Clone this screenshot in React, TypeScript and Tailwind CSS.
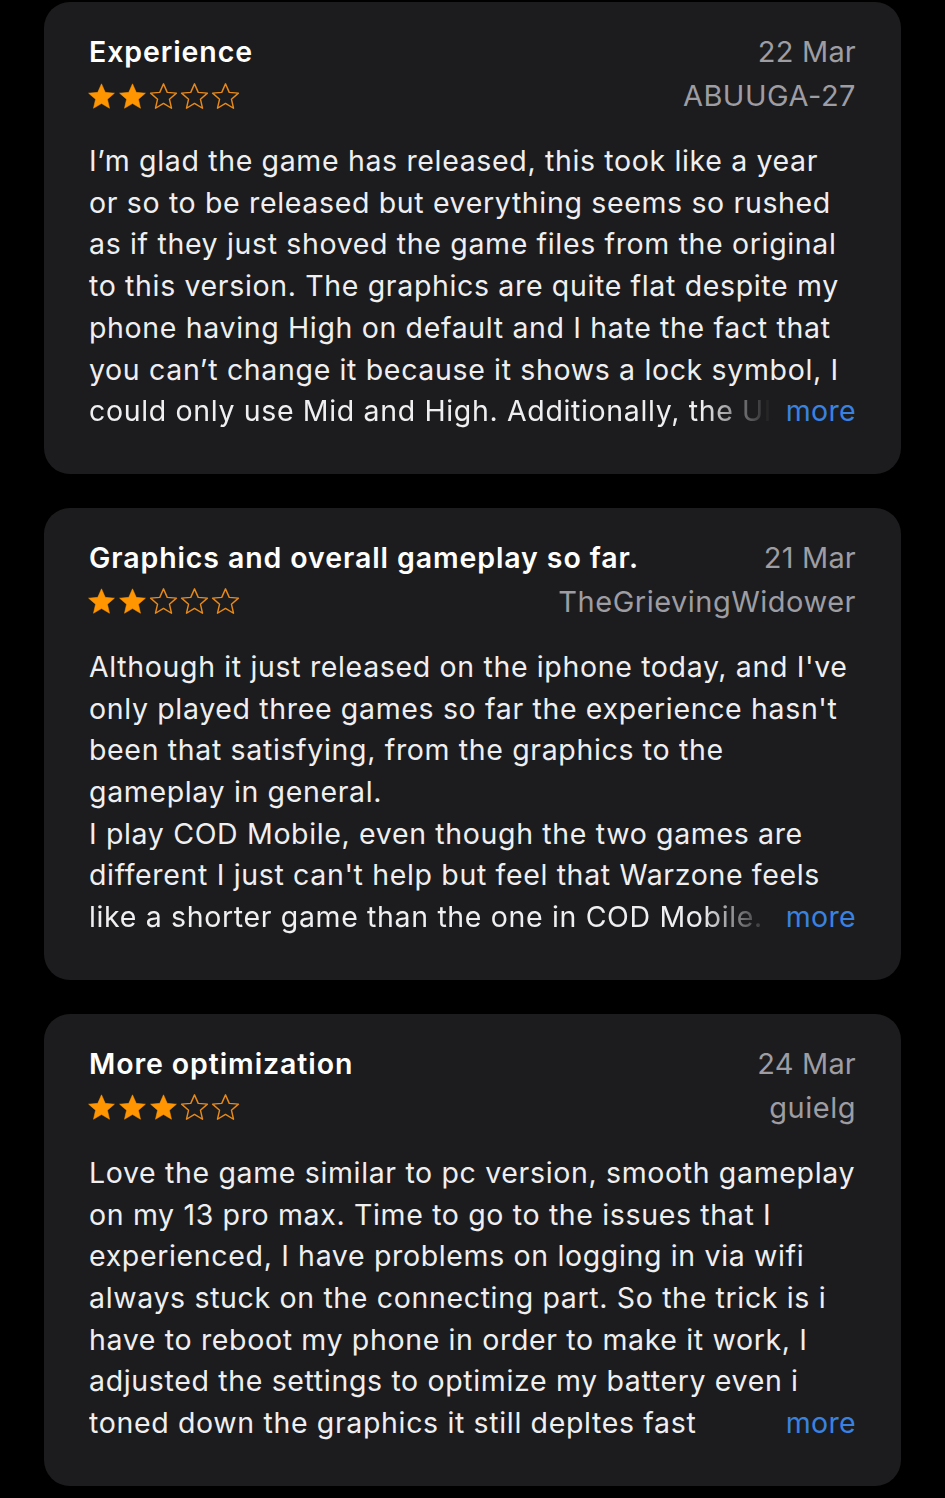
import React from "react";

type Review = {
  title: string;
  date: string;
  author: string;
  stars: number;
  lines: string[];
  fade?: boolean;
};

const reviews: Review[] = [
  {
    title: "Experience",
    date: "22 Mar",
    author: "ABUUGA-27",
    stars: 2,
    fade: true,
    lines: [
      "I’m glad the game has released, this took like a year",
      "or so to be released but everything seems so rushed",
      "as if they just shoved the game files from the original",
      "to this version. The graphics are quite flat despite my",
      "phone having High on default and I hate the fact that",
      "you can’t change it because it shows a lock symbol, I",
      "could only use Mid and High. Additionally, the UI",
    ],
  },
  {
    title: "Graphics and overall gameplay so far.",
    date: "21 Mar",
    author: "TheGrievingWidower",
    stars: 2,
    fade: true,
    lines: [
      "Although it just released on the iphone today, and I've",
      "only played three games so far the experience hasn't",
      "been that satisfying, from the graphics to the",
      "gameplay in general.",
      "I play COD Mobile, even though the two games are",
      "different I just can't help but feel that Warzone feels",
      "like a shorter game than the one in COD Mobile.",
    ],
  },
  {
    title: "More optimization",
    date: "24 Mar",
    author: "guielg",
    stars: 3,
    lines: [
      "Love the game similar to pc version, smooth gameplay",
      "on my 13 pro max. Time to go to the issues that I",
      "experienced, I have problems on logging in via wifi",
      "always stuck on the connecting part. So the trick is i",
      "have to reboot my phone in order to make it work, I",
      "adjusted the settings to optimize my battery even i",
      "toned down the graphics it still depltes fast",
    ],
  },
];

function Star({ filled }: { filled: boolean }) {
  return (
    <svg width="31" height="31" viewBox="0 0 24 24" className="flex-shrink-0">
      <path
        d="M12 2.2l2.9 6.6 7.1.6-5.4 4.7 1.6 7-6.2-3.7-6.2 3.7 1.6-7L2 9.4l7.1-.6z"
        fill={filled ? "#ff9500" : "none"}
        stroke={filled ? "#ff9500" : "#e88a1a"}
        strokeWidth={filled ? 0.4 : 1.1}
        strokeLinejoin="round"
      />
    </svg>
  );
}

function ReviewCard({ review }: { review: Review }) {
  const last = review.lines.length - 1;
  return (
    <div className="rounded-[26px] bg-[#1c1c1e] pl-[45px] pr-[45px] pt-[32px] pb-[42px]">
      {/* Header */}
      <div className="flex items-center justify-between leading-[36px]">
        <div className="text-[28.5px] font-semibold tracking-[0.9px] text-white">
          {review.title}
        </div>
        <div className="text-[29px] tracking-[0.2px] text-[#9d9da3]">{review.date}</div>
      </div>
      <div className="mt-[8px] flex items-center justify-between leading-[36px]">
        <div className="flex -ml-[3px]">
          {[0, 1, 2, 3, 4].map((i) => (
            <Star key={i} filled={i < review.stars} />
          ))}
        </div>
        <div className="text-[29px] tracking-[0.5px] text-[#9d9da3]">{review.author}</div>
      </div>

      {/* Body */}
      <div className="mt-[26px] text-[28.5px] leading-[41.7px] tracking-[0.65px] text-[#efeff1]">
        {review.lines.map((line, i) =>
          i === last ? (
            <div key={i} className="flex justify-between gap-[8px]">
              <span
                className={
                  review.fade
                    ? "min-w-0 flex-1 overflow-hidden whitespace-nowrap [mask-image:linear-gradient(to_right,black_89%,transparent_99%)]"
                    : "min-w-0 overflow-hidden whitespace-nowrap"
                }
              >
                {line}
              </span>
              <span className="flex-shrink-0 tracking-[0.3px] text-[#3a82e0]">more</span>
            </div>
          ) : (
            <div key={i} className="whitespace-nowrap">
              {line}
            </div>
          )
        )}
      </div>
    </div>
  );
}

export default function App() {
  return (
    <div
      className="min-h-[1498px] bg-black px-[44px] pt-[2px] pb-[14px] flex flex-col gap-[34px]"
      style={{ fontFamily: "Inter, 'Noto Sans', sans-serif" }}
    >
      {reviews.map((r) => (
        <ReviewCard key={r.title} review={r} />
      ))}
    </div>
  );
}
